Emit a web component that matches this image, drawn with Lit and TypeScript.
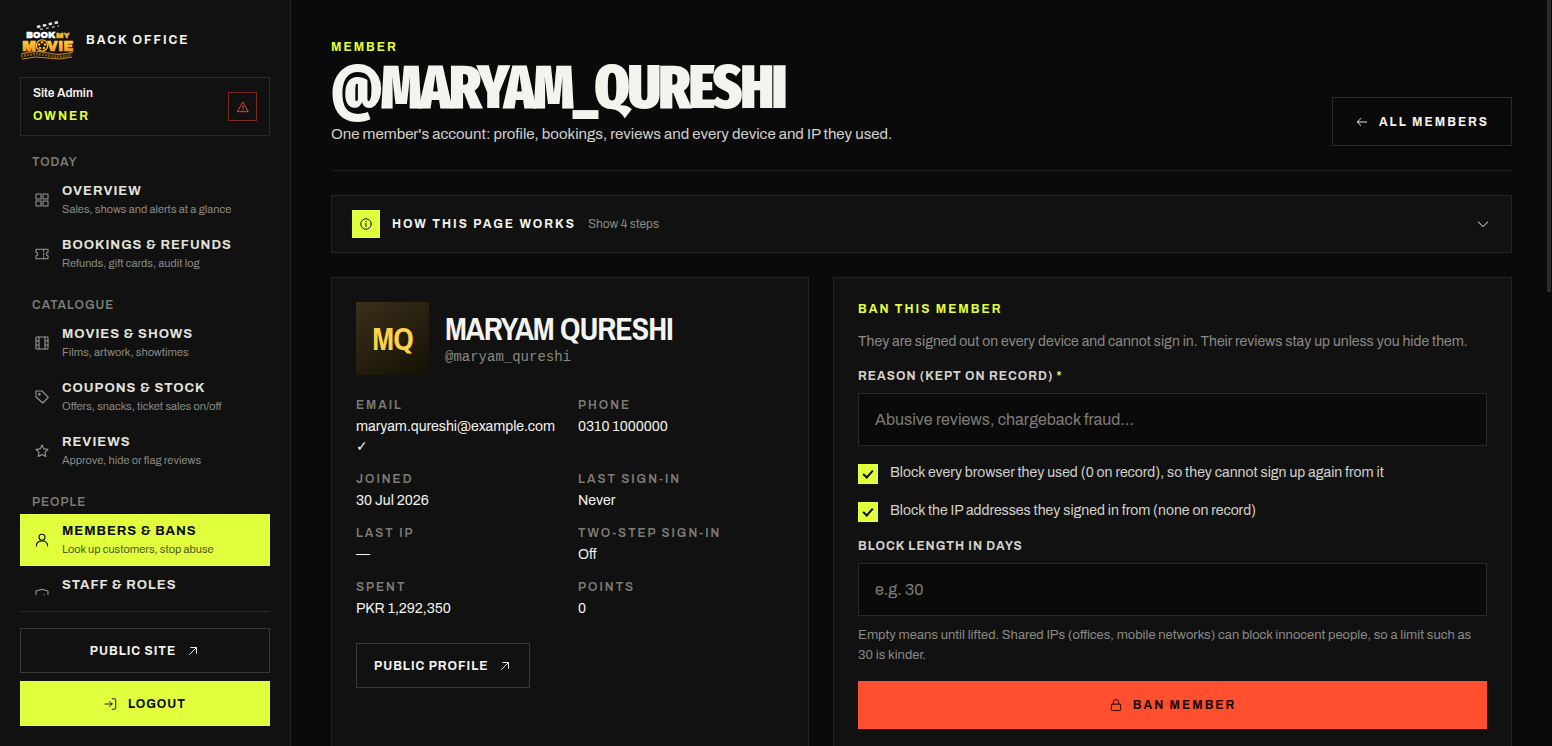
import { LitElement, html, css, svg, nothing } from "lit";
import { customElement, property } from "lit/decorators.js";
import { classMap } from "lit/directives/class-map.js";

const icons = {
  grid: svg`<rect x="3" y="3" width="7.5" height="7.5"/><rect x="13.5" y="3" width="7.5" height="7.5"/><rect x="3" y="13.5" width="7.5" height="7.5"/><rect x="13.5" y="13.5" width="7.5" height="7.5"/>`,
  ticket: svg`<path d="M3 5h18v4.5a2.5 2.5 0 0 0 0 5V19H3v-4.5a2.5 2.5 0 0 0 0-5z"/><path d="M14.5 5v3M14.5 10.5v3M14.5 16v3"/>`,
  film: svg`<rect x="3" y="3" width="18" height="18" rx="1"/><path d="M7.5 3v18M16.5 3v18M3 9h4.5M3 15h4.5M16.5 9H21M16.5 15H21"/>`,
  tag: svg`<path d="M3 3h9l9.5 9.5-8.5 8.5L3 12z"/><circle cx="8" cy="8" r="1.3"/>`,
  star: svg`<path d="M12 3l2.7 5.8 6.3.8-4.6 4.4 1.2 6.3L12 17.2l-5.6 3.1L7.6 14 3 9.6l6.3-.8z"/>`,
  user: svg`<circle cx="12" cy="8" r="4.5"/><path d="M3.5 21c0-4.700 3.500-7.500 8.500-7.500s8.500 2.800 8.500 7.500"/>`,
  shield: svg`<path d="M3 17V7.500L12 5l9 2.500V17c-2 3-5 4.500-9 5.500-4-1-7-2.500-9-5.500z"/><path d="M8.500 15l2.500 2 4.500-4"/>`,
  alert: svg`<path d="M12 4l9 16H3z"/><path d="M12 10v4.500M12 17v.5"/>`,
  out: svg`<path d="M6 18L18 6M8 6h10v10"/>`,
  enter: svg`<path d="M2 12h12M9.500 7.500L14 12l-4.500 4.500M14 3h4.500A1.500 1.500 0 0 1 20 4.500v15a1.500 1.500 0 0 1-1.500 1.500H14"/>`,
  back: svg`<path d="M20 12H4M10 6l-6 6 6 6"/>`,
  info: svg`<circle cx="12" cy="12" r="9"/><path d="M12 11v5.500M12 7.500v.8"/>`,
  chevron: svg`<path d="M5 9l7 7 7-7"/>`,
  lock: svg`<rect x="4" y="10.500" width="16" height="11" rx="1.500"/><path d="M7.500 10.500V7a4.500 4.500 0 0 1 9 0v3.500"/>`,
};
type IconName = keyof typeof icons;

@customElement("ui-icon")
class UiIcon extends LitElement {
  static styles = css`
    :host { display: block; width: 16px; height: 16px; flex: none; }
    svg { display: block; width: 100%; height: 100%; fill: none; stroke: currentColor; stroke-width: 1.6; stroke-linejoin: round; stroke-linecap: round; }
  `;
  @property() name: IconName = "grid";
  render() {
    return html`<svg viewBox="0 0 24 24" aria-hidden="true">${icons[this.name]}</svg>`;
  }
}

interface NavItem { icon: IconName; title: string; note?: string; active?: boolean }
const nav: { label: string; items: NavItem[] }[] = [
  { label: "Today", items: [
    { icon: "grid", title: "Overview", note: "Sales, shows and alerts at a glance" },
    { icon: "ticket", title: "Bookings & refunds", note: "Refunds, gift cards, audit log" },
  ] },
  { label: "Catalogue", items: [
    { icon: "film", title: "Movies & shows", note: "Films, artwork, showtimes" },
    { icon: "tag", title: "Coupons & stock", note: "Offers, snacks, ticket sales on/off" },
    { icon: "star", title: "Reviews", note: "Approve, hide or flag reviews" },
  ] },
  { label: "People", items: [
    { icon: "user", title: "Members & bans", note: "Look up customers, stop abuse", active: true },
    { icon: "shield", title: "Staff & roles" },
  ] },
];

@customElement("side-bar")
class SideBar extends LitElement {
  static styles = css`
    :host { display: flex; flex-direction: column; box-sizing: border-box; height: 100vh; padding: 20px; background: #111; border-right: 1px solid #242424; }
    .brand { display: flex; align-items: center; gap: 12px; height: 40px; margin-bottom: 17px; font-weight: 700; font-size: 12px; line-height: 16px; letter-spacing: 2px; text-transform: uppercase; color: #f4f3ee; text-decoration: none; }
    .logo { width: 54px; height: 40px; flex: none; letter-spacing: 0; }
    .who { display: flex; align-items: center; justify-content: space-between; padding: 0 12px; height: 57px; border: 1px solid #2a2a2a; }
    .name { font-weight: 600; font-size: 12px; line-height: 18px; color: #f4f3ee; }
    .role { font-weight: 700; font-size: 12px; line-height: 28px; letter-spacing: 2px; text-transform: uppercase; color: #e1ff3c; }
    .warn { display: grid; place-items: center; width: 29px; height: 29px; padding: 0; background: none; border: 1px solid #7a2c20; color: #e04a32; }
    .warn ui-icon { width: 14px; height: 14px; }
    nav { flex: 1; min-height: 0; overflow: hidden; margin: 1px 0 16px; }
    h2 { margin: 0; padding: 18px 12px 5px; font-weight: 600; font-size: 12px; line-height: 14px; letter-spacing: 1px; text-transform: uppercase; color: #7d7c77; }
    ul { display: grid; gap: 2px; margin: 0; padding: 0; list-style: none; }
    .item { display: flex; align-items: center; gap: 12px; height: 52px; padding: 0 14px; color: #9a9994; text-decoration: none; }
    .title { display: block; font-weight: 700; font-size: 13px; line-height: 18px; letter-spacing: 1px; text-transform: uppercase; color: #e3e2dc; }
    .note { display: block; min-height: 18px; font-size: 11px; line-height: 18px; color: #8a8984; }
    .active { background: #e1ff3c; color: #0a0a0a; }
    .active .title { color: #0a0a0a; }
    .active .note { color: #4f5a18; }
    .foot { display: grid; gap: 8px; padding-top: 16px; border-top: 1px solid #2a2a2a; }
    .btn { display: flex; align-items: center; justify-content: center; gap: 10px; box-sizing: border-box; height: 45px; border: 1px solid #383838; background: none; font: inherit; font-weight: 700; font-size: 12px; line-height: 16px; letter-spacing: 1px; text-transform: uppercase; color: #f4f3ee; text-decoration: none; }
    .btn ui-icon { width: 14px; height: 14px; }
    .solid { background: #e1ff3c; border-color: #e1ff3c; color: #0a0a0a; }
  `;
  private logo() {
    return html`<svg class="logo" viewBox="0 0 54 40" role="img" aria-label="Book My Movie">
      <defs><linearGradient id="gold" x1="0" y1="0" x2="0" y2="1"><stop offset="0" stop-color="#ffd84a"/><stop offset="1" stop-color="#f08a12"/></linearGradient></defs>
      <path d="M17 7l22-5" stroke="#e4e4e4" stroke-width="2.500" stroke-dasharray="3.500 2.500"/>
      <path d="M20 9.500l19-3.500" stroke="#a8a8a8" stroke-width="1.500" stroke-dasharray="3 3"/>
      <g font-family="Archivo Black, Archivo, sans-serif">
        <text x="6" y="18" font-size="9" fill="#fff">BOOK</text>
        <text x="36" y="18" font-size="8" fill="#f6b426">MY</text>
        <text x="2" y="31" font-size="15" fill="url(#gold)">M</text>
        <text x="27" y="31" font-size="14" fill="url(#gold)">VIE</text>
      </g>
      <circle cx="22" cy="25.500" r="5.600" fill="#1a1205" stroke="#f8b62a" stroke-width="1.400"/>
      <g fill="#f8b62a"><circle cx="22" cy="22.300" r="1.300"/><circle cx="25" cy="24.500" r="1.300"/><circle cx="23.900" cy="28" r="1.300"/><circle cx="20.100" cy="28" r="1.300"/><circle cx="19" cy="24.500" r="1.300"/></g>
      <path d="M1 34q14-4 27-1t25-1" fill="none" stroke="#c8861a" stroke-width="1.200"/>
      <path d="M1 36.500q14-4 27-1t24-1" fill="none" stroke="#7c5212" stroke-width="2.500" stroke-dasharray="2 1"/>
      <path d="M2 39q14-3.500 26-1t24-1" fill="none" stroke="#c98718" stroke-width="1"/>
    </svg>`;
  }
  render() {
    return html`
      <a class="brand" href="#">${this.logo()}<span>Back office</span></a>
      <div class="who">
        <div><div class="name">Site Admin</div><div class="role">Owner</div></div>
        <button class="warn" type="button" aria-label="Alerts"><ui-icon name="alert"></ui-icon></button>
      </div>
      <nav>
        ${nav.map((s) => html`<h2>${s.label}</h2>
          <ul>${s.items.map((i) => html`<li><a href="#" class=${classMap({ item: true, active: !!i.active })} aria-current=${i.active ? "page" : nothing}>
            <ui-icon name=${i.icon}></ui-icon>
            <span><span class="title">${i.title}</span><span class="note">${i.note ?? nothing}</span></span>
          </a></li>`)}</ul>`)}
      </nav>
      <div class="foot">
        <a class="btn" href="#">Public site <ui-icon name="out"></ui-icon></a>
        <button class="btn solid" type="button"><ui-icon name="enter"></ui-icon> Logout</button>
      </div>`;
  }
}

const facts = [
  ["Email", "maryam.qureshi@example.com ✓"], ["Phone", "0310 1000000"],
  ["Joined", "30 Jul 2026"], ["Last sign-in", "Never"],
  ["Last IP", "—"], ["Two-step sign-in", "Off"],
  ["Spent", "PKR 1,292,350"], ["Points", "0"],
];

@customElement("app-root")
class AppRoot extends LitElement {
  static styles = css`
    :host { display: grid; grid-template-columns: 291px minmax(0, 1fr); height: 100vh; overflow: hidden; background: #0a0a0a; color: #f4f3ee; font-family: Archivo, "Liberation Sans", Arial, sans-serif; }
    main { box-sizing: border-box; height: 100vh; overflow: hidden; padding: 40px 40px 0; }
    .head { display: flex; align-items: flex-end; justify-content: space-between; gap: 24px; padding-bottom: 24px; border-bottom: 1px solid #1c1c1c; }
    .caps { margin: 0; font-weight: 700; font-size: 12px; letter-spacing: 2px; text-transform: uppercase; }
    .lime { color: #e1ff3c; }
    .eyebrow { line-height: 14px; }
    h1 { margin: 6px 0; font-family: "Fira Sans Extra Condensed", "Roboto Condensed", "Open Sans Condensed", sans-serif; font-weight: 900; font-size: 61px; line-height: 56px; letter-spacing: -2px; text-transform: uppercase; color: #f4f3ee; }
    .lede { margin: 0; font-size: 15px; line-height: 24px; color: #d3d2cc; }
    .btn { display: inline-flex; align-items: center; justify-content: center; gap: 10px; box-sizing: border-box; height: 45px; padding: 0 17px; border: 1px solid #383838; background: none; font: inherit; font-weight: 700; font-size: 12px; line-height: 16px; letter-spacing: 1px; text-transform: uppercase; color: #f4f3ee; text-decoration: none; white-space: nowrap; }
    .btn ui-icon { width: 14px; height: 14px; }
    .large { height: 49px; padding: 0 22px; letter-spacing: 2px; }
    .ghost { border-color: #2a2a2a; }
    details { margin-top: 24px; background: #111; border: 1px solid #242424; }
    summary { display: flex; align-items: center; gap: 12px; height: 56px; padding: 0 20px; list-style: none; }
    .arrow { margin-left: auto; color: #a3a29c; }
    .badge { display: grid; place-items: center; width: 28px; height: 28px; background: #e1ff3c; color: #0a0a0a; }
    .badge ui-icon { width: 14px; height: 14px; }
    .hint { font-size: 12px; line-height: 16px; color: #8a8984; }
    .cards { display: grid; grid-template-columns: 1fr 1.42fr; gap: 24px; margin-top: 24px; }
    .card { padding: 24px; background: #111; border: 1px solid #242424; min-height: 480px; }
    .person { display: flex; align-items: center; gap: 16px; }
    .avatar { display: grid; place-items: center; width: 73px; height: 73px; background: linear-gradient(145deg, #3a301a, #141005); font-family: "Archivo Narrow", "Roboto Condensed", sans-serif; font-weight: 700; font-size: 32px; line-height: 36px; letter-spacing: -1px; color: #ffd24a; }
    h2 { margin: 0; font-family: "Archivo Narrow", "Roboto Condensed", sans-serif; font-weight: 700; font-size: 32px; line-height: 36px; letter-spacing: -1px; text-transform: uppercase; }
    .handle { margin: 0; font-family: "Liberation Mono", monospace; font-size: 14px; line-height: 20px; color: #8a8984; }
    dl { display: grid; grid-template-columns: 1fr 1fr; gap: 13px 16px; margin: 21px 0 24px; }
    dt { margin-bottom: 3px; font-weight: 600; font-size: 12px; line-height: 18px; letter-spacing: 2px; text-transform: uppercase; color: #7d7c77; }
    dd { margin: 0; font-size: 14px; line-height: 20px; }
    form { display: grid; gap: 16px; }
    .title { line-height: 14px; }
    .about { margin: 0; font-size: 14px; line-height: 20px; color: #8a8984; }
    .field { display: grid; gap: 9px; }
    .label { font-weight: 700; font-size: 12px; line-height: 16px; letter-spacing: 1px; text-transform: uppercase; color: #d3d2cc; }
    .text { box-sizing: border-box; width: 100%; height: 53px; padding: 0 16px; border: 1px solid #2a2a2a; border-radius: 0; background: #0a0a0a; color: #f4f3ee; font: inherit; font-size: 16px; }
    .text::placeholder { color: #7d7c77; opacity: 1; }
    .check { display: flex; align-items: flex-start; gap: 12px; font-size: 14px; line-height: 22px; color: #d3d2cc; }
    .check input { appearance: none; display: grid; place-items: center; flex: none; width: 20px; height: 20px; margin: 2px 0 0; background: #1a1a1a; }
    .check input:checked { background: #e1ff3c; }
    .check input:checked::before { content: ""; box-sizing: border-box; width: 10px; height: 6px; margin-bottom: 2px; border: solid #0a0a0a; border-width: 0 0 2px 2px; rotate: -48deg; }
    .help { margin: 0; font-size: 13px; line-height: 20px; color: #8a8984; }
    .danger { height: 48px; border-color: #ff4f2e; background: #ff4f2e; color: #190803; letter-spacing: 2px; }
    .thumb { position: fixed; top: 0; right: 1px; width: 4px; height: 292px; background: #2c2c2c; }
  `;
  render() {
    return html`
      <side-bar></side-bar>
      <main>
        <header class="head">
          <div>
            <p class="caps lime eyebrow">Member</p>
            <h1>@maryam_qureshi</h1>
            <p class="lede">One member's account: profile, bookings, reviews and every device and IP they used.</p>
          </div>
          <a class="btn large ghost" href="#"><ui-icon name="back"></ui-icon> All members</a>
        </header>
        <details>
          <summary>
            <span class="badge"><ui-icon name="info"></ui-icon></span>
            <span class="caps">How this page works</span>
            <span class="hint">Show 4 steps</span>
            <ui-icon class="arrow" name="chevron"></ui-icon>
          </summary>
        </details>
        <div class="cards">
          <section class="card">
            <div class="person">
              <span class="avatar" aria-hidden="true">MQ</span>
              <div><h2>Maryam Qureshi</h2><p class="handle">@maryam_qureshi</p></div>
            </div>
            <dl>${facts.map(([k, v]) => html`<div><dt>${k}</dt><dd>${v}</dd></div>`)}</dl>
            <a class="btn" href="#">Public profile <ui-icon name="out"></ui-icon></a>
          </section>
          <section class="card">
            <form @submit=${(e: Event) => e.preventDefault()}>
              <h3 class="caps lime title">Ban this member</h3>
              <p class="about">They are signed out on every device and cannot sign in. Their reviews stay up unless you hide them.</p>
              <div class="field">
                <label class="label" for="reason">Reason (kept on record) <span class="lime">*</span></label>
                <input class="text" id="reason" type="text" placeholder="Abusive reviews, chargeback fraud…">
              </div>
              <label class="check"><input type="checkbox" checked><span>Block every browser they used (0 on record), so they cannot sign up again from it</span></label>
              <label class="check"><input type="checkbox" checked><span>Block the IP addresses they signed in from (none on record)</span></label>
              <div class="field">
                <label class="label" for="days">Block length in days</label>
                <input class="text" id="days" type="text" inputmode="numeric" placeholder="e.g. 30">
                <p class="help">Empty means until lifted. Shared IPs (offices, mobile networks) can block innocent people, so a limit such as 30 is kinder.</p>
              </div>
              <button class="btn danger" type="submit"><ui-icon name="lock"></ui-icon> Ban member</button>
            </form>
          </section>
        </div>
      </main>
      <div class="thumb" aria-hidden="true"></div>`;
  }
}
